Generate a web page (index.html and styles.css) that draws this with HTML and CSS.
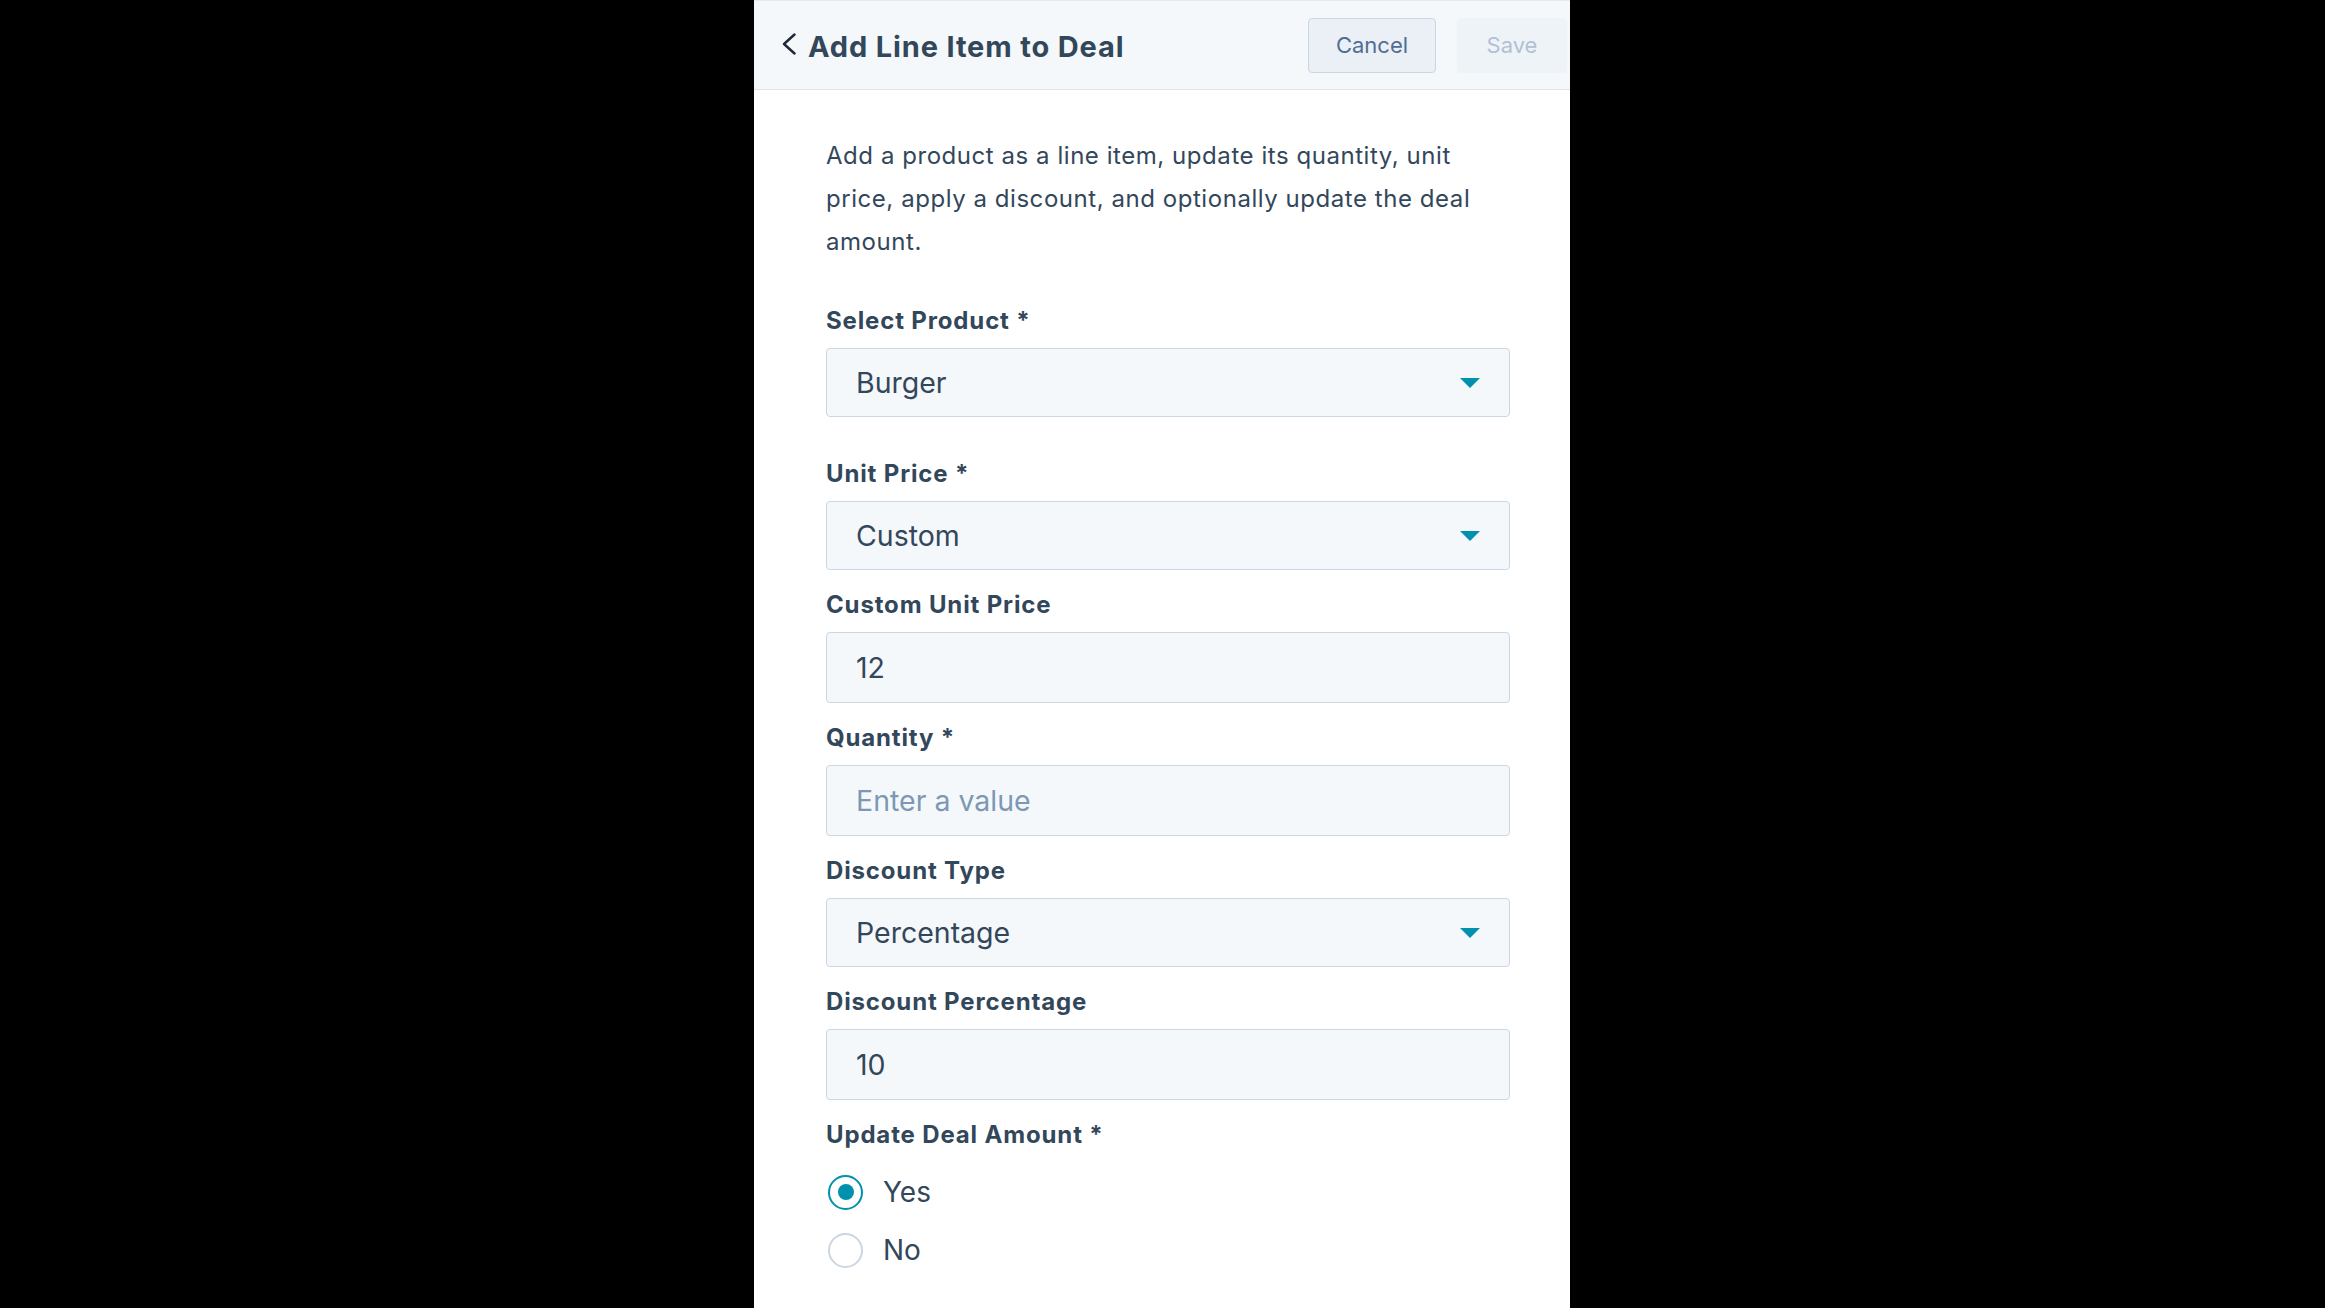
FILE: index.html
```html
<!DOCTYPE html>
<html lang="en">
<head>
<meta charset="utf-8">
<title>Add Line Item to Deal</title>
<link rel="stylesheet" href="styles.css">
</head>
<body>
<div class="stage">
  <aside class="panel">
    <header class="panel-header">
      <div class="header-title">
        <svg class="back" width="14" height="22" viewBox="0 0 14 22" aria-hidden="true"><polyline points="12.5,1.5 2,11 12.5,20.5" fill="none" stroke="#1e2a36" stroke-width="2.4" stroke-linecap="round" stroke-linejoin="round"/></svg>
        <h1 class="title">Add Line Item to Deal</h1>
      </div>
      <div class="header-actions">
        <button class="btn btn-cancel" type="button">Cancel</button>
        <button class="btn btn-save" type="button" disabled>Save</button>
      </div>
    </header>
    <div class="panel-body">
      <p class="description">Add a product as a line item, update its quantity, unit price, apply a discount, and optionally update the deal amount.</p>

      <div class="field field-spaced">
        <div class="label">Select Product *</div>
        <div class="select"><span class="value">Burger</span><svg class="caret" width="20" height="10" viewBox="0 0 20 10"><polygon points="0,0 20,0 10,10" fill="#0091ae"/></svg></div>
      </div>

      <div class="field">
        <div class="label">Unit Price *</div>
        <div class="select"><span class="value">Custom</span><svg class="caret" width="20" height="10" viewBox="0 0 20 10"><polygon points="0,0 20,0 10,10" fill="#0091ae"/></svg></div>
      </div>

      <div class="field">
        <div class="label">Custom Unit Price</div>
        <input class="input" type="text" value="12">
      </div>

      <div class="field">
        <div class="label">Quantity *</div>
        <input class="input" type="text" placeholder="Enter a value">
      </div>

      <div class="field">
        <div class="label">Discount Type</div>
        <div class="select"><span class="value">Percentage</span><svg class="caret" width="20" height="10" viewBox="0 0 20 10"><polygon points="0,0 20,0 10,10" fill="#0091ae"/></svg></div>
      </div>

      <div class="field">
        <div class="label">Discount Percentage</div>
        <input class="input" type="text" value="10">
      </div>

      <div class="field">
        <div class="label">Update Deal Amount *</div>
        <div class="radios">
          <div class="radio-row"><span class="radio radio-on"></span><span class="radio-text">Yes</span></div>
          <div class="radio-row"><span class="radio"></span><span class="radio-text">No</span></div>
        </div>
      </div>
    </div>
  </aside>
</div>
</body>
</html>
```
FILE: styles.css
```css
* { box-sizing: border-box; }
html, body { margin: 0; padding: 0; height: 100%; }
body {
  background: #000;
  font-family: Inter, "Noto Sans", sans-serif;
  color: #33475b;
}
.stage {
  display: flex;
  justify-content: flex-start;
  height: 1308px;
  padding-left: 754px;
}
.panel {
  width: 816px;
  height: 100%;
  background: #fff;
  display: flex;
  flex-direction: column;
}
.panel-header {
  height: 90px;
  background: #f5f8fa;
  border-top: 1px solid #e4e9ef;
  border-bottom: 1px solid #dfe3eb;
  display: flex;
  align-items: center;
  justify-content: space-between;
  padding: 0 3px 0 28px;
}
.header-title {
  display: flex;
  align-items: center;
  gap: 12px;
}
.back { display: block; margin-top: -2px; }
.title {
  margin: 0;
  font-size: 29px;
  font-weight: 700;
  color: #33475b;
  letter-spacing: 0.85px;
  position: relative;
  top: 1px;
}
.header-actions {
  display: flex;
  gap: 21px;
  align-items: center;
}
.btn {
  height: 55px;
  border-radius: 4px;
  font-family: inherit;
  font-size: 22px;
  font-weight: 400;
  padding: 0;
}
.btn-cancel {
  width: 128px;
  background: #eaf0f6;
  border: 1px solid #cbd6e2;
  color: #506e91;
}
.btn-save {
  width: 110px;
  background: #eef3f8;
  border: 1px solid #eef3f8;
  color: #b0c1d4;
}
.panel-body {
  padding: 44px 60px 0 72px;
}
.description {
  margin: 0 0 41px;
  font-size: 24px;
  letter-spacing: 0.55px;
  line-height: 43px;
  color: #33475b;
}
.field { margin-bottom: 18px; }
.field-spaced { margin-bottom: 40px; }
.label {
  font-size: 24px;
  font-weight: 700;
  letter-spacing: 0.85px;
  line-height: 34px;
  margin-bottom: 10px;
  color: #33475b;
}
.select, .input {
  width: 100%;
  background: #f5f8fa;
  border: 1px solid #cbd6e2;
  border-radius: 4px;
  font-family: inherit;
  font-size: 28.5px;
  color: #33475b;
}
.select {
  height: 69px;
  display: flex;
  align-items: center;
  justify-content: space-between;
  padding: 0 29px 0 29px;
}
.input {
  display: block;
  height: 71px;
  padding: 0 29px;
  outline: none;
}
.input::placeholder { color: #7c98b6; opacity: 1; }
.caret { display: block; }
.radios {
  padding-top: 8px;
  display: flex;
  flex-direction: column;
  gap: 14px;
}
.radio-row {
  height: 44px;
  display: flex;
  align-items: center;
  gap: 20px;
  padding-left: 2px;
}
.radio {
  width: 35px;
  height: 35px;
  border-radius: 50%;
  border: 2px solid #cbd6e2;
  background: #fff;
  position: relative;
  flex: none;
}
.radio-on { border-color: #0091ae; }
.radio-on::after {
  content: "";
  position: absolute;
  left: 50%;
  top: 50%;
  width: 16px;
  height: 16px;
  margin: -8px 0 0 -8px;
  border-radius: 50%;
  background: #0091ae;
}
.radio-text {
  font-size: 28px;
  color: #33475b;
}
```
